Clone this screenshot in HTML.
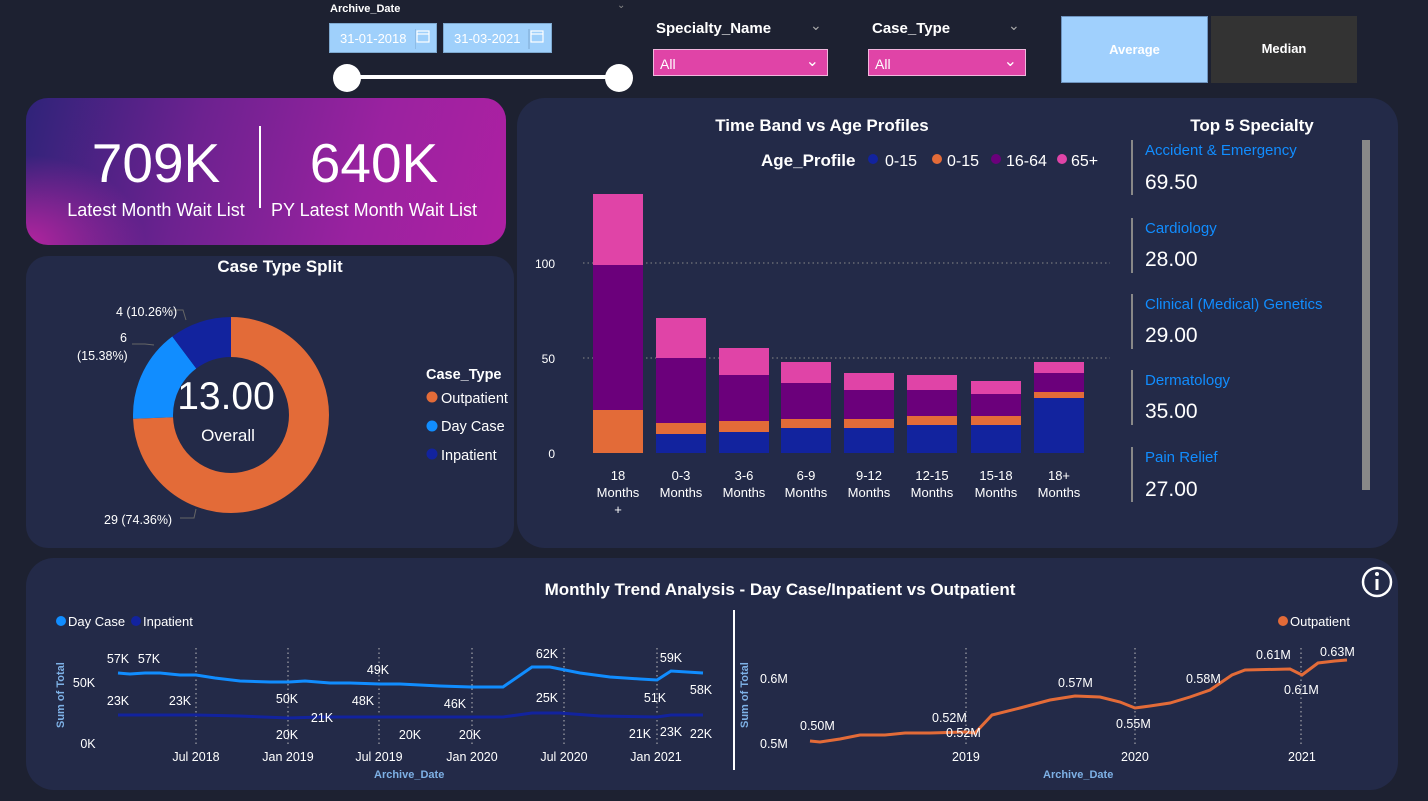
<!DOCTYPE html>
<html><head><meta charset="utf-8"><style>
*{margin:0;padding:0;box-sizing:border-box}
body{width:1428px;height:801px;background:#1d2131;font-family:"Liberation Sans",sans-serif;color:#fff;position:relative;overflow:hidden}
.abs{position:absolute}
.panel{position:absolute;background:#232a48;border-radius:22px}
.dd{position:absolute;background:#e044a7;border:1px solid #f2b6dd;height:27px;font-size:14px;padding:6px 6px}
.lbl{position:absolute;font-size:15px;font-weight:bold}
.date{position:absolute;background:#9fd0fb;border:1px solid #7ea9d0;height:30px;font-size:13px;color:#fff;padding:7px 0 0 10px}
</style></head><body>
<div class="abs" style="left:330px;top:3px;font-size:11px;font-weight:bold">Archive_Date</div>
<div class="abs" style="left:617px;top:0px;font-size:10px;color:#888">&#8964;</div>
<div class="date" style="left:329px;top:23px;width:108px">31-01-2018</div>
<div class="date" style="left:443px;top:23px;width:109px">31-03-2021</div>
<svg class="abs" style="left:415px;top:29px" width="140" height="20"><g fill="none" stroke="#fff" stroke-width="1.2"><rect x="2" y="2" width="12" height="11"/><line x1="2" y1="5" x2="14" y2="5"/><rect x="116" y="2" width="12" height="11"/><line x1="116" y1="5" x2="128" y2="5"/></g><line x1="0" y1="0" x2="0" y2="20" stroke="#7ea9d0"/><line x1="114" y1="0" x2="114" y2="20" stroke="#7ea9d0"/></svg>
<div class="abs" style="left:347px;top:75px;width:272px;height:4px;background:#fff"></div>
<div class="abs" style="left:333px;top:64px;width:28px;height:28px;border-radius:50%;background:#fff"></div>
<div class="abs" style="left:605px;top:64px;width:28px;height:28px;border-radius:50%;background:#fff"></div>

<div class="lbl" style="left:656px;top:20px">Specialty_Name</div>
<div class="abs" style="left:810px;top:17px;color:#aaa;font-size:14px">&#8964;</div>
<div class="dd" style="left:653px;top:49px;width:175px">All<span style="position:absolute;right:8px;top:1px;font-size:16px">&#8964;</span></div>
<div class="lbl" style="left:872px;top:20px">Case_Type</div>
<div class="abs" style="left:1008px;top:17px;color:#aaa;font-size:14px">&#8964;</div>
<div class="dd" style="left:868px;top:49px;width:158px">All<span style="position:absolute;right:8px;top:1px;font-size:16px">&#8964;</span></div>

<div class="abs" style="left:1061px;top:16px;width:147px;height:67px;background:#a0d0fd;border:1px solid #6e93be;font-size:13px;font-weight:bold;text-align:center;line-height:66px">Average</div>
<div class="abs" style="left:1211px;top:16px;width:146px;height:67px;background:#333;font-size:13px;font-weight:bold;text-align:center;line-height:66px">Median</div>

<div class="abs" style="left:26px;top:98px;width:480px;height:147px;border-radius:22px;background:radial-gradient(ellipse 120px 90px at 0% 100%,#b5249f,transparent),linear-gradient(105deg,#2f2379 0%,#6d2290 35%,#9a22a0 70%,#ae20a2 100%)"></div>
<div class="abs" style="left:259px;top:126px;width:2px;height:82px;background:#fff"></div>
<div class="abs" style="left:26px;top:128px;width:260px;text-align:center;font-size:55px;line-height:70px">709K</div>
<div class="abs" style="left:26px;top:200px;width:260px;text-align:center;font-size:18px">Latest Month Wait List</div>
<div class="abs" style="left:244px;top:128px;width:260px;text-align:center;font-size:55px;line-height:70px">640K</div>
<div class="abs" style="left:244px;top:200px;width:260px;text-align:center;font-size:18px">PY Latest Month Wait List</div>

<div class="panel" style="left:26px;top:256px;width:488px;height:292px"></div>
<div class="abs" style="left:26px;top:257px;width:508px;text-align:center;font-size:17px;font-weight:bold">Case Type Split</div>
<svg class="abs" style="left:0;top:0" width="520" height="550">
<g transform="rotate(-90 231 415)" fill="none" stroke-width="40">
<circle cx="231" cy="415" r="78" stroke="#e36b38" stroke-dasharray="364.4 490.1"/>
<circle cx="231" cy="415" r="78" stroke="#118dff" stroke-dasharray="0 364.4 75.4 490"/>
<circle cx="231" cy="415" r="78" stroke="#12239e" stroke-dasharray="0 439.8 50.3 490"/>
</g>
<polyline points="186,320 183,310 170,310" fill="none" stroke="#666"/>
<polyline points="154,345 145,344 132,344" fill="none" stroke="#666"/>
<polyline points="196,509 194,518 180,518" fill="none" stroke="#666"/>
<g font-size="12.5" fill="#fff" font-family="Liberation Sans,sans-serif">
<text x="116" y="316">4 (10.26%)</text>
<text x="120" y="342">6</text>
<text x="77" y="360">(15.38%)</text>
<text x="104" y="524">29 (74.36%)</text>
</g>
<text x="226" y="409" font-size="39" fill="#fff" text-anchor="middle" font-family="Liberation Sans,sans-serif">13.00</text>
<text x="228" y="441" font-size="17" fill="#fff" text-anchor="middle" font-family="Liberation Sans,sans-serif">Overall</text>
<g font-family="Liberation Sans,sans-serif" font-size="14.5" fill="#fff">
<text x="426" y="379" font-weight="bold">Case_Type</text>
<circle cx="432" cy="397" r="5.5" fill="#e36b38"/><text x="441" y="403">Outpatient</text>
<circle cx="432" cy="426" r="5.5" fill="#118dff"/><text x="441" y="431">Day Case</text>
<circle cx="432" cy="454" r="5.5" fill="#12239e"/><text x="441" y="460">Inpatient</text>
</g>
</svg>

<div class="panel" style="left:517px;top:98px;width:881px;height:450px;border-radius:28px"></div>
<svg class="abs" style="left:0;top:0" width="1428" height="560" font-family="Liberation Sans,sans-serif">
<text x="822" y="131" font-size="17" font-weight="bold" fill="#fff" text-anchor="middle">Time Band vs Age Profiles</text>
<text x="761" y="166" font-size="17" font-weight="bold" fill="#fff">Age_Profile</text>
<g font-size="16" fill="#fff">
<circle cx="873" cy="159" r="5" fill="#12239e"/><text x="885" y="166">0-15</text>
<circle cx="937" cy="159" r="5" fill="#e36b38"/><text x="947" y="166">0-15</text>
<circle cx="996" cy="159" r="5" fill="#6b007b"/><text x="1006" y="166">16-64</text>
<circle cx="1062" cy="159" r="5" fill="#e044a7"/><text x="1071" y="166">65+</text>
</g>
<g stroke="#888" stroke-dasharray="1.5 3"><line x1="583" y1="263" x2="1110" y2="263"/><line x1="583" y1="358" x2="1110" y2="358"/></g>
<g font-size="12" fill="#fff" text-anchor="end"><text x="555" y="268">100</text><text x="555" y="363">50</text><text x="555" y="458">0</text></g>
<g>
<rect x="593" y="410" width="50" height="43" fill="#e36b38"/><rect x="593" y="265" width="50" height="145" fill="#6b007b"/><rect x="593" y="194" width="50" height="71" fill="#e044a7"/>
<rect x="656" y="434" width="50" height="19" fill="#12239e"/><rect x="656" y="423" width="50" height="11" fill="#e36b38"/><rect x="656" y="358" width="50" height="65" fill="#6b007b"/><rect x="656" y="318" width="50" height="40" fill="#e044a7"/>
<rect x="719" y="432" width="50" height="21" fill="#12239e"/><rect x="719" y="421" width="50" height="11" fill="#e36b38"/><rect x="719" y="375" width="50" height="46" fill="#6b007b"/><rect x="719" y="348" width="50" height="27" fill="#e044a7"/>
<rect x="781" y="428" width="50" height="25" fill="#12239e"/><rect x="781" y="419" width="50" height="9" fill="#e36b38"/><rect x="781" y="383" width="50" height="36" fill="#6b007b"/><rect x="781" y="362" width="50" height="21" fill="#e044a7"/>
<rect x="844" y="428" width="50" height="25" fill="#12239e"/><rect x="844" y="419" width="50" height="9" fill="#e36b38"/><rect x="844" y="390" width="50" height="29" fill="#6b007b"/><rect x="844" y="373" width="50" height="17" fill="#e044a7"/>
<rect x="907" y="425" width="50" height="28" fill="#12239e"/><rect x="907" y="416" width="50" height="9" fill="#e36b38"/><rect x="907" y="390" width="50" height="26" fill="#6b007b"/><rect x="907" y="375" width="50" height="15" fill="#e044a7"/>
<rect x="971" y="425" width="50" height="28" fill="#12239e"/><rect x="971" y="416" width="50" height="9" fill="#e36b38"/><rect x="971" y="394" width="50" height="22" fill="#6b007b"/><rect x="971" y="381" width="50" height="13" fill="#e044a7"/>
<rect x="1034" y="398" width="50" height="55" fill="#12239e"/><rect x="1034" y="392" width="50" height="6" fill="#e36b38"/><rect x="1034" y="373" width="50" height="19" fill="#6b007b"/><rect x="1034" y="362" width="50" height="11" fill="#e044a7"/>
</g>
<g font-size="13" fill="#fff" text-anchor="middle">
<text x="618" y="480">18</text><text x="618" y="497">Months</text><text x="618" y="514">+</text>
<text x="681" y="480">0-3</text><text x="681" y="497">Months</text>
<text x="744" y="480">3-6</text><text x="744" y="497">Months</text>
<text x="806" y="480">6-9</text><text x="806" y="497">Months</text>
<text x="869" y="480">9-12</text><text x="869" y="497">Months</text>
<text x="932" y="480">12-15</text><text x="932" y="497">Months</text>
<text x="996" y="480">15-18</text><text x="996" y="497">Months</text>
<text x="1059" y="480">18+</text><text x="1059" y="497">Months</text>
</g>
<text x="1252" y="131" font-size="17" font-weight="bold" fill="#fff" text-anchor="middle">Top 5 Specialty</text>
<g fill="#888"><rect x="1131" y="140" width="2" height="55"/><rect x="1131" y="218" width="2" height="55"/><rect x="1131" y="294" width="2" height="55"/><rect x="1131" y="370" width="2" height="55"/><rect x="1131" y="447" width="2" height="55"/><rect x="1362" y="140" width="8" height="350"/></g>
<g font-size="15" fill="#118dff">
<text x="1145" y="155">Accident &amp; Emergency</text><text x="1145" y="233">Cardiology</text><text x="1145" y="309">Clinical (Medical) Genetics</text><text x="1145" y="385">Dermatology</text><text x="1145" y="462">Pain Relief</text></g>
<g font-size="21" fill="#fff">
<text x="1145" y="189">69.50</text><text x="1145" y="266">28.00</text><text x="1145" y="342">29.00</text><text x="1145" y="418">35.00</text><text x="1145" y="496">27.00</text></g>
</svg>

<div class="panel" style="left:26px;top:558px;width:1372px;height:232px;border-radius:28px"></div>
<svg class="abs" style="left:0;top:0" width="1428" height="801" font-family="Liberation Sans,sans-serif">
<text x="780" y="595" font-size="17" font-weight="bold" fill="#fff" text-anchor="middle">Monthly Trend Analysis  - Day Case/Inpatient vs Outpatient</text>
<circle cx="1377" cy="582" r="14" fill="none" stroke="#fff" stroke-width="2.5"/>
<rect x="1375.5" y="579" width="3" height="11" fill="#fff"/><circle cx="1377" cy="574" r="2" fill="#fff"/>
<line x1="734" y1="610" x2="734" y2="770" stroke="#fff" stroke-width="2"/>
<g font-size="13" fill="#fff">
<circle cx="61" cy="621" r="5" fill="#118dff"/><text x="68" y="626">Day Case</text>
<circle cx="136" cy="621" r="5" fill="#12239e"/><text x="143" y="626">Inpatient</text>
<circle cx="1283" cy="621" r="5" fill="#e36b38"/><text x="1290" y="626">Outpatient</text>
</g>
<g stroke="#bbb" stroke-dasharray="1.5 3"><line x1="196" y1="648" x2="196" y2="745"/><line x1="288" y1="648" x2="288" y2="745"/><line x1="379" y1="648" x2="379" y2="745"/><line x1="472" y1="648" x2="472" y2="745"/><line x1="564" y1="648" x2="564" y2="745"/><line x1="657" y1="648" x2="657" y2="745"/>
<line x1="966" y1="648" x2="966" y2="745"/><line x1="1135" y1="648" x2="1135" y2="745"/><line x1="1301" y1="648" x2="1301" y2="745"/></g>
<polyline fill="none" stroke="#118dff" stroke-width="3" points="118,673 130,674 145,673 160,673 180,675 196,675 215,678 240,681 270,682 289,682 305,681 330,683 350,683 380,684 400,684 440,686 471,687 503,687 532,667 550,667 580,673 610,677 640,679 657,680 671,671 703,673"/>
<polyline fill="none" stroke="#12239e" stroke-width="3" points="118,715 196,715 240,716 289,718 320,717 380,717 471,717 503,717 532,713 560,713 600,716 657,717 671,715 703,715"/>
<polyline fill="none" stroke="#e36b38" stroke-width="3" points="810,741 820,742 840,739 860,735 885,735 905,733 930,733 965,732 975,733 992,715 1020,708 1050,700 1075,696 1100,697 1120,702 1135,708 1150,706 1170,703 1190,697 1210,690 1232,675 1245,670 1290,669 1302,675 1318,663 1335,661 1347,660"/>
<g font-size="12.5" fill="#fff" text-anchor="middle">
<text x="118" y="663">57K</text><text x="149" y="663">57K</text><text x="84" y="687">50K</text><text x="88" y="748">0K</text>
<text x="118" y="705">23K</text><text x="180" y="705">23K</text><text x="287" y="703">50K</text><text x="378" y="674">49K</text><text x="363" y="705">48K</text><text x="455" y="708">46K</text>
<text x="322" y="722">21K</text><text x="287" y="739">20K</text><text x="410" y="739">20K</text><text x="470" y="739">20K</text>
<text x="547" y="658">62K</text><text x="547" y="702">25K</text><text x="671" y="662">59K</text><text x="655" y="702">51K</text><text x="701" y="694">58K</text>
<text x="640" y="738">21K</text><text x="671" y="736">23K</text><text x="701" y="738">22K</text>
<text x="196" y="761">Jul 2018</text><text x="288" y="761">Jan 2019</text><text x="379" y="761">Jul 2019</text><text x="472" y="761">Jan 2020</text><text x="564" y="761">Jul 2020</text><text x="656" y="761">Jan 2021</text>
</g>
<g font-size="12.5" fill="#fff">
<text x="760" y="683">0.6M</text><text x="760" y="748">0.5M</text>
<text x="800" y="730">0.50M</text><text x="932" y="722">0.52M</text><text x="946" y="737">0.52M</text><text x="1058" y="687">0.57M</text><text x="1116" y="728">0.55M</text><text x="1186" y="683">0.58M</text><text x="1256" y="659">0.61M</text><text x="1284" y="694">0.61M</text><text x="1320" y="656">0.63M</text>
<text x="952" y="761">2019</text><text x="1121" y="761">2020</text><text x="1288" y="761">2021</text>
</g>
<g font-size="11" fill="#7eb1e6" font-weight="bold">
<text x="374" y="778">Archive_Date</text><text x="1043" y="778">Archive_Date</text>
<text transform="translate(64 728) rotate(-90)">Sum of Total</text>
<text transform="translate(748 728) rotate(-90)">Sum of Total</text>
</g>
</svg>
</body></html>
